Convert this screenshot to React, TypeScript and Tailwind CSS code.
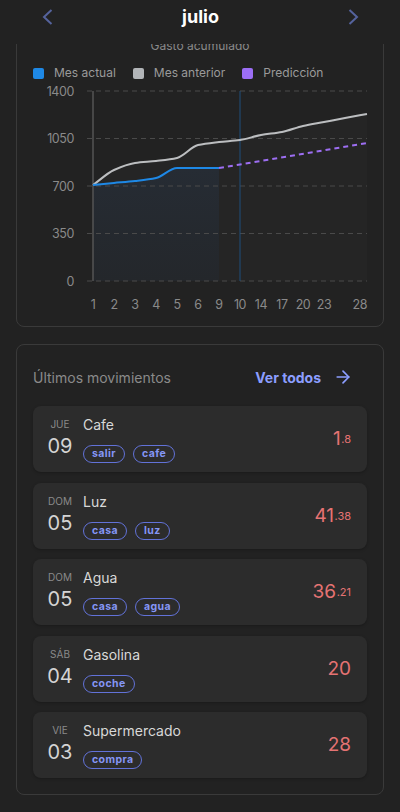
import React from "react";
import { ArrowRight } from "lucide-react";

function monoPath(p: number[][]) {
  const n = p.length;
  const dx: number[] = [], dy: number[] = [], m: number[] = [];
  for (let i = 0; i < n - 1; i++) {
    dx.push(p[i + 1][0] - p[i][0]);
    dy.push(p[i + 1][1] - p[i][1]);
    m.push(dy[i] / dx[i]);
  }
  const t: number[] = [m[0]];
  for (let i = 1; i < n - 1; i++) {
    if (m[i - 1] * m[i] <= 0) t.push(0);
    else
      t.push(
        (3 * (dx[i - 1] + dx[i])) /
          ((2 * dx[i] + dx[i - 1]) / m[i - 1] + (dx[i] + 2 * dx[i - 1]) / m[i])
      );
  }
  t.push(m[n - 2]);
  let d = `M${p[0][0]},${p[0][1]}`;
  for (let i = 0; i < n - 1; i++) {
    const h = dx[i] / 3;
    d += ` C${p[i][0] + h},${p[i][1] + t[i] * h} ${p[i + 1][0] - h},${p[i + 1][1] - t[i + 1] * h} ${p[i + 1][0]},${p[i + 1][1]}`;
  }
  return d;
}

const grey = [
  [93, 185], [114, 170], [135, 163], [156, 161], [177, 158], [198, 145], [219, 142],
  [240, 140], [261, 135], [282, 132], [303, 126], [324, 122], [345, 118], [367, 114],
];
const blue = [
  [93, 185], [114, 183], [135, 181], [156, 178], [177, 168], [198, 168], [219, 168],
];

const xLabels: [string, number][] = [
  ["1", 93], ["2", 114], ["3", 135], ["4", 156], ["5", 177], ["6", 198], ["9", 219],
  ["10", 240], ["14", 261], ["17", 282], ["20", 303], ["23", 324],
];
const yGrid: [string, number][] = [
  ["1400", 91], ["1050", 138.5], ["700", 186], ["350", 233.5], ["0", 281],
];

function Chart() {
  const gp = monoPath(grey);
  const bp = monoPath(blue);
  return (
    <svg width={366} height={236} viewBox="17 84 366 236" className="block">
      <defs>
        <linearGradient id="bf" x1="0" y1="0" x2="0" y2="1">
          <stop offset="0" stopColor="#262c34" />
          <stop offset="1" stopColor="#24272b" />
        </linearGradient>
      </defs>
      <path d={`${gp} L367,281 L93,281 Z`} fill="#252525" />
      <path d={`${bp} L219,281 L93,281 Z`} fill="url(#bf)" />
      {yGrid.map(([l, y]) => (
        <g key={l}>
          <line x1={87} x2={367} y1={y} y2={y} stroke="#4a4a4a" strokeWidth={1} strokeDasharray="5 4" />
          <text x={74} y={y + 4.5} textAnchor="end" fill="#8a8a8a" fontSize={12.5} letterSpacing={-0.4} fontFamily="Inter, sans-serif">
            {l}
          </text>
        </g>
      ))}
      <line x1={93} x2={93} y1={91} y2={281} stroke="#555" strokeWidth={1.5} />
      <line x1={240} x2={240} y1={91} y2={281} stroke="#1f4f7d" strokeWidth={1} />
      <path d={gp} fill="none" stroke="#bcbec0" strokeWidth={2} />
      <path d={bp} fill="none" stroke="#1e88e5" strokeWidth={2} />
      <line x1={219} y1={168} x2={367} y2={143} stroke="#9d6ef2" strokeWidth={2} strokeDasharray="5 4" />
      {xLabels.map(([l, x]) => (
        <text key={l} x={x} y={308.5} textAnchor="middle" fill="#8a8a8a" fontSize={12.5} letterSpacing={-0.4} fontFamily="Inter, sans-serif">
          {l}
        </text>
      ))}
      <text x={367} y={308.5} textAnchor="end" fill="#8a8a8a" fontSize={12.5} letterSpacing={-0.4} fontFamily="Inter, sans-serif">
        28
      </text>
    </svg>
  );
}

type Mov = { dow: string; day: string; name: string; tags: string[]; int: string; dec?: string };
const movs: Mov[] = [
  { dow: "JUE", day: "09", name: "Cafe", tags: ["salir", "cafe"], int: "1", dec: ".8" },
  { dow: "DOM", day: "05", name: "Luz", tags: ["casa", "luz"], int: "41", dec: ".38" },
  { dow: "DOM", day: "05", name: "Agua", tags: ["casa", "agua"], int: "36", dec: ".21" },
  { dow: "SÁB", day: "04", name: "Gasolina", tags: ["coche"], int: "20" },
  { dow: "VIE", day: "03", name: "Supermercado", tags: ["compra"], int: "28" },
];

function Legend({ color, label }: { color: string; label: string }) {
  return (
    <div className="flex items-center gap-[10px]">
      <span className="w-[11px] h-[11px] rounded-[2px]" style={{ background: color }} />
      <span className="text-[12px] leading-[16px] text-[#9a9a9a]">{label}</span>
    </div>
  );
}

export default function App() {
  return (
    <div
      className="w-[400px] h-[812px] bg-[#222222] overflow-hidden flex flex-col"
      style={{ fontFamily: "Inter, 'Noto Sans', sans-serif" }}
    >
      <div className="h-[44px] shrink-0 relative z-10 bg-[#222222]">
        <div className="h-[34px] flex items-center justify-between pl-[42px] pr-[41px]">
          <svg width={11} height={16} viewBox="0 0 11 16">
            <polyline points="9.5,1 2,8 9.5,15" fill="none" stroke="#55639d" strokeWidth={2} />
          </svg>
          <span className="text-[18px] font-bold text-white leading-[24px]">julio</span>
          <svg width={11} height={16} viewBox="0 0 11 16">
            <polyline points="1.5,1 9,8 1.5,15" fill="none" stroke="#55639d" strokeWidth={2} />
          </svg>
        </div>
      </div>
      <div className="flex-1 overflow-hidden px-[16px]">
        <div className="mt-[-19px] border border-[#3a3a3a] rounded-[8px] pt-[12px] pb-[6px]">
          <div className="text-center text-[12px] leading-[16px] text-[#8a8a8a]">Gasto acumulado</div>
          <div className="flex items-center pl-[16px] mt-[11px] gap-[17px]">
            <Legend color="#1e88e5" label="Mes actual" />
            <Legend color="#b2b5b8" label="Mes anterior" />
            <Legend color="#9c6ef5" label="Predicción" />
          </div>
          <div className="mt-[3px]">
            <Chart />
          </div>
        </div>
        <div className="mt-[17px] border border-[#3a3a3a] rounded-[8px] px-[16px] pt-[16px] pb-[16px]">
          <div className="h-[32px] flex items-center justify-between mb-[13px]">
            <span className="text-[14px] text-[#8a8a8a]">Últimos movimientos</span>
            <div className="flex items-center gap-[12px] pr-[14px]">
              <span className="text-[14px] font-bold text-[#8c9eff]">Ver todos</span>
              <ArrowRight size={20} color="#8c9eff" strokeWidth={2} />
            </div>
          </div>
          <div className="flex flex-col gap-[10.5px]">
            {movs.map((m, i) => (
              <div
                key={i}
                className="h-[66px] bg-[#2c2c2c] rounded-[8px] flex items-center pl-[10px] pr-[16px] shadow-[0_1px_3px_rgba(0,0,0,0.25)]"
              >
                <div className="w-[34px] flex flex-col items-center mb-[3px]">
                  <span className="text-[10px] leading-[14px] text-[#8a8a8a]">{m.dow}</span>
                  <span className="text-[20px] leading-[24px] mt-[3px] text-[#d4d4d4]">{m.day}</span>
                </div>
                <div className="ml-[6px] flex flex-col flex-1">
                  <span className="text-[14px] leading-[20px] text-[#d8d8d8]">{m.name}</span>
                  <div className="flex gap-[8px] mt-[10px]">
                    {m.tags.map((t) => (
                      <span
                        key={t}
                        className="h-[18px] px-[8px] rounded-full border border-[#6272d8] text-[10.5px] font-bold tracking-[0.4px] text-[#8596f5] flex items-center"
                      >
                        {t}
                      </span>
                    ))}
                  </div>
                </div>
                <div className="text-[#e57373] leading-[24px] whitespace-nowrap">
                  <span className="text-[19px] align-baseline">{m.int}</span>
                  {m.dec && <span className="text-[11px] align-[2px] ml-[0.5px]">{m.dec}</span>}
                </div>
              </div>
            ))}
          </div>
        </div>
      </div>
    </div>
  );
}
